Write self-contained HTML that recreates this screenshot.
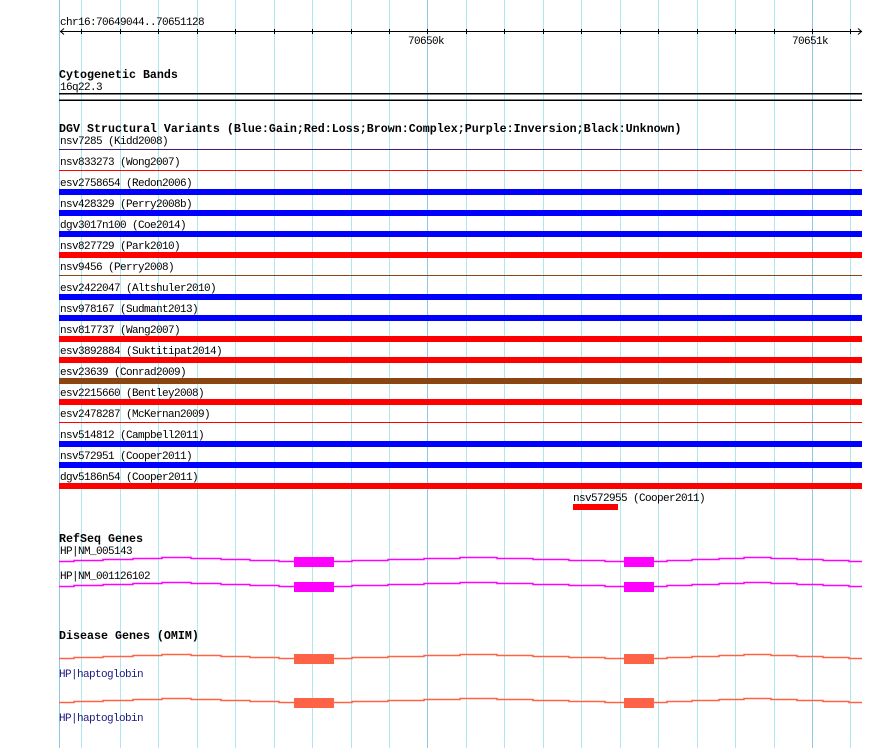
<!DOCTYPE html>
<html><head><meta charset="utf-8"><style>
html,body{margin:0;padding:0;background:#fff;}
svg{display:block;}
text{font-family:"Liberation Mono",monospace;font-size:11px;letter-spacing:-0.6px;fill:#000;}
.h{font-weight:bold;font-size:11.67px;letter-spacing:0;}
.o{fill:#1a1a80;}
</style></head><body>
<svg width="890" height="748" viewBox="0 0 890 748" xmlns="http://www.w3.org/2000/svg">
<rect width="890" height="748" fill="#fff"/>
<g stroke="#aee8ef" stroke-width="1">
<line x1="81.5" y1="0" x2="81.5" y2="748"/><line x1="120.5" y1="0" x2="120.5" y2="748"/><line x1="158.5" y1="0" x2="158.5" y2="748"/><line x1="197.5" y1="0" x2="197.5" y2="748"/><line x1="235.5" y1="0" x2="235.5" y2="748"/><line x1="274.5" y1="0" x2="274.5" y2="748"/><line x1="312.5" y1="0" x2="312.5" y2="748"/><line x1="351.5" y1="0" x2="351.5" y2="748"/><line x1="389.5" y1="0" x2="389.5" y2="748"/><line x1="466.5" y1="0" x2="466.5" y2="748"/><line x1="504.5" y1="0" x2="504.5" y2="748"/><line x1="543.5" y1="0" x2="543.5" y2="748"/><line x1="581.5" y1="0" x2="581.5" y2="748"/><line x1="620.5" y1="0" x2="620.5" y2="748"/><line x1="658.5" y1="0" x2="658.5" y2="748"/><line x1="697.5" y1="0" x2="697.5" y2="748"/><line x1="735.5" y1="0" x2="735.5" y2="748"/><line x1="774.5" y1="0" x2="774.5" y2="748"/><line x1="850.5" y1="0" x2="850.5" y2="748"/>
</g>
<g stroke="#8cc8e8" stroke-width="1">
<line x1="59.5" y1="0" x2="59.5" y2="748"/><line x1="427.5" y1="0" x2="427.5" y2="748"/><line x1="812.5" y1="0" x2="812.5" y2="748"/>
</g>
<text x="60" y="25">chr16:70649044..70651128</text>
<g stroke="#000" stroke-width="1" fill="none">
<line x1="60" y1="31.5" x2="862" y2="31.5"/>
<polyline points="64,28.5 60.5,31.5 64,34.5"/>
<polyline points="858,28.5 861.5,31.5 858,34.5"/>
<path d="M81.5 29v5M120.5 29v5M158.5 29v5M197.5 29v5M235.5 29v5M274.5 29v5M312.5 29v5M351.5 29v5M389.5 29v5M427.5 29v5M466.5 29v5M504.5 29v5M543.5 29v5M581.5 29v5M620.5 29v5M658.5 29v5M697.5 29v5M735.5 29v5M774.5 29v5M812.5 29v5M850.5 29v5"/>
</g>
<text x="408" y="44">70650k</text>
<text x="792" y="44">70651k</text>
<text class="h" x="59" y="78">Cytogenetic Bands</text>
<text x="60" y="90">16q22.3</text>
<rect x="59" y="93" width="803" height="1.5" fill="#000"/>
<rect x="59" y="99.5" width="803" height="1.5" fill="#000"/>
<text class="h" x="59" y="132">DGV Structural Variants (Blue:Gain;Red:Loss;Brown:Complex;Purple:Inversion;Black:Unknown)</text>
<text x="60" y="144">nsv7285 (Kidd2008)</text><rect x="59" y="149" width="803" height="1" fill="#401a80"/>
<text x="60" y="165">nsv833273 (Wong2007)</text><rect x="59" y="170" width="803" height="1" fill="#f00"/>
<text x="60" y="186">esv2758654 (Redon2006)</text><rect x="59" y="189" width="803" height="6" fill="#00f"/>
<text x="60" y="207">nsv428329 (Perry2008b)</text><rect x="59" y="210" width="803" height="6" fill="#00f"/>
<text x="60" y="228">dgv3017n100 (Coe2014)</text><rect x="59" y="231" width="803" height="6" fill="#00f"/>
<text x="60" y="249">nsv827729 (Park2010)</text><rect x="59" y="252" width="803" height="6" fill="#f00"/>
<text x="60" y="270">nsv9456 (Perry2008)</text><rect x="59" y="275" width="803" height="1" fill="#8b4513"/>
<text x="60" y="291">esv2422047 (Altshuler2010)</text><rect x="59" y="294" width="803" height="6" fill="#00f"/>
<text x="60" y="312">nsv978167 (Sudmant2013)</text><rect x="59" y="315" width="803" height="6" fill="#00f"/>
<text x="60" y="333">nsv817737 (Wang2007)</text><rect x="59" y="336" width="803" height="6" fill="#f00"/>
<text x="60" y="354">esv3892884 (Suktitipat2014)</text><rect x="59" y="357" width="803" height="6" fill="#f00"/>
<text x="60" y="375">esv23639 (Conrad2009)</text><rect x="59" y="378" width="803" height="6" fill="#8b4513"/>
<text x="60" y="396">esv2215660 (Bentley2008)</text><rect x="59" y="399" width="803" height="6" fill="#f00"/>
<text x="60" y="417">esv2478287 (McKernan2009)</text><rect x="59" y="422" width="803" height="1" fill="#f00"/>
<text x="60" y="438">nsv514812 (Campbell2011)</text><rect x="59" y="441" width="803" height="6" fill="#00f"/>
<text x="60" y="459">nsv572951 (Cooper2011)</text><rect x="59" y="462" width="803" height="6" fill="#00f"/>
<text x="60" y="480">dgv5186n54 (Cooper2011)</text><rect x="59" y="483" width="803" height="6" fill="#f00"/>
<text x="573" y="501">nsv572955 (Cooper2011)</text><rect x="573" y="504" width="45" height="6" fill="#f00"/>
<text class="h" x="59" y="542">RefSeq Genes</text>
<text x="60" y="554">HP|NM_005143</text>
<text x="60" y="579">HP|NM_001126102</text>
<defs>
<path id="w" fill="none" stroke-width="1.5" d="M59 0H74V-1H103V-2H133V-3H162V-4H191V-3H221V-2H250V-1H279V0H294 M334 0H352V-1H388V-2H424V-3H460V-4H497V-3H533V-2H569V-1H605V0H624 M654 0H667V-1H692V-2H719V-3H744V-4H771V-3H797V-2H823V-1H849V0H862"/>
</defs>
<g stroke="#ff00ff" fill="#ff00ff">
<use href="#w" transform="translate(0,561.5)"/>
<rect x="294" y="557" width="40" height="10" stroke="none"/><rect x="624" y="557" width="30" height="10" stroke="none"/>
<use href="#w" transform="translate(0,586.5)"/>
<rect x="294" y="582" width="40" height="10" stroke="none"/><rect x="624" y="582" width="30" height="10" stroke="none"/>
</g>
<text class="h" x="59" y="639">Disease Genes (OMIM)</text>
<g stroke="#ff6347" fill="#ff6347">
<use href="#w" transform="translate(0,658.5)"/>
<rect x="294" y="654" width="40" height="10" stroke="none"/><rect x="624" y="654" width="30" height="10" stroke="none"/>
<use href="#w" transform="translate(0,702.5)"/>
<rect x="294" y="698" width="40" height="10" stroke="none"/><rect x="624" y="698" width="30" height="10" stroke="none"/>
</g>
<text class="o" x="59" y="677">HP|haptoglobin</text>
<text class="o" x="59" y="721">HP|haptoglobin</text>
</svg>
</body></html>
